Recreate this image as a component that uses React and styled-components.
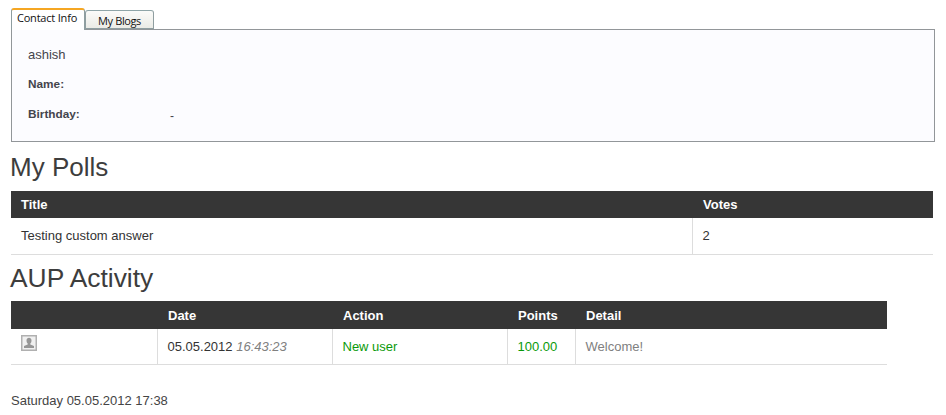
import React from "react";
import styled, { createGlobalStyle } from "styled-components";

const GlobalStyle = createGlobalStyle`
  html, body {
    margin: 0;
    padding: 0;
    background: #ffffff;
    font-family: "Liberation Sans", Arial, sans-serif;
  }
`;

const Page = styled.div`
  width: 946px;
  height: 415px;
  overflow: hidden;
  padding: 8px 0 0 11px;
  box-sizing: border-box;
  color: #3b3b3b;
`;

const TabBar = styled.div`
  display: flex;
  align-items: flex-end;
  height: 21px;
  position: relative;
  z-index: 1;
`;

const Tab = styled.div`
  box-sizing: border-box;
  width: ${(p) => p.$width}px;
  height: ${(p) => (p.$active ? 22 : 19)}px;
  margin-bottom: ${(p) => (p.$active ? -1 : 0)}px;
  border: 1px solid #8f9ea0;
  border-top: ${(p) => (p.$active ? "2px solid #f5a623" : "1px solid #8fa5a8")};
  border-bottom: ${(p) => (p.$active ? "none" : "1px solid #8f9ea0")};
  border-radius: 3px 3px 0 0;
  background: ${(p) => (p.$active ? "#ffffff" : "linear-gradient(#fbfbf9, #ebebe6)")};
  font-family: "Open Sans", "Liberation Sans", sans-serif;
  font-size: 11px;
  line-height: ${(p) => (p.$active ? 15 : 20)}px;
  letter-spacing: ${(p) => (p.$active ? -0.2 : -0.4)}px;
  padding-right: ${(p) => (p.$active ? 2 : 0)}px;
  text-align: center;
  color: #111111;
`;

const Panel = styled.div`
  box-sizing: border-box;
  width: 924px;
  height: 113px;
  border: 1px solid #929699;
  background: #fcfcff;
  padding: 17px 16px 0;
  font-size: 12px;
  color: #44444c;
`;

const UserName = styled.div`
  font-size: 13px;
  line-height: 15px;
  margin-bottom: 15px;
`;

const InfoRow = styled.div`
  display: flex;
  height: 30px;
`;

const InfoLabel = styled.div`
  width: 142px;
  font-size: 11.8px;
  font-weight: bold;
  line-height: 15px;
`;

const InfoValue = styled.div`
  line-height: 15px;
  padding-top: 2px;
`;

const Heading = styled.h2`
  margin: ${(p) => p.$top}px 0 0 -1px;
  font-size: ${(p) => p.$size || 26}px;
  font-weight: normal;
  line-height: 29px;
  height: ${(p) => p.$h}px;
  color: #3d3d3d;
`;

const Table = styled.table`
  width: ${(p) => p.$width}px;
  border-collapse: collapse;
  table-layout: fixed;
  font-size: 13px;
`;

const HeadCell = styled.th`
  background: #363636;
  color: #ffffff;
  font-size: 13px;
  font-weight: bold;
  text-align: left;
  height: ${(p) => p.$h}px;
  padding: ${(p) => (p.$h > 27 ? 2 : 0)}px 0 0 ${(p) => (p.$first ? 10 : 11)}px;
  box-sizing: border-box;
`;

const Cell = styled.td`
  height: ${(p) => p.$h}px;
  padding: 0 0 ${(p) => p.$lift || 0}px 10px;
  box-sizing: border-box;
  border-bottom: 1px solid #dddddd;
  border-left: ${(p) => (p.$first ? "none" : "1px solid #dddddd")};
  color: ${(p) => p.$color || "#333333"};
  vertical-align: ${(p) => (p.$top ? "top" : "middle")};
`;

const Time = styled.i`
  color: #808080;
`;

const Avatar = styled.svg`
  display: block;
  margin-top: 6px;
`;

const Footer = styled.div`
  margin-top: 28px;
  font-size: 13px;
  line-height: 15px;
  color: #444444;
`;

const polls = [{ title: "Testing custom answer", votes: 2 }];

export default function App() {
  return (
    <Page>
      <GlobalStyle />
      <TabBar>
        <Tab $active $width={74}>Contact Info</Tab>
        <Tab $width={69}>My Blogs</Tab>
      </TabBar>
      <Panel>
        <UserName>ashish</UserName>
        <InfoRow>
          <InfoLabel>Name:</InfoLabel>
        </InfoRow>
        <InfoRow>
          <InfoLabel>Birthday:</InfoLabel>
          <InfoValue>-</InfoValue>
        </InfoRow>
      </Panel>
      <Heading $top={11} $h={38}>My Polls</Heading>
      <Table $width={922}>
        <colgroup>
          <col width="681" />
          <col width="241" />
        </colgroup>
        <thead>
          <tr>
            <HeadCell $h={27} $first>Title</HeadCell>
            <HeadCell $h={27}>Votes</HeadCell>
          </tr>
        </thead>
        <tbody>
          {polls.map((p) => (
            <tr key={p.title}>
              <Cell $h={36} $lift={1} $first>{p.title}</Cell>
              <Cell $h={36} $lift={1}>{p.votes}</Cell>
            </tr>
          ))}
        </tbody>
      </Table>
      <Heading $top={9} $h={37} $size={26.4}>AUP Activity</Heading>
      <Table $width={876}>
        <colgroup>
          <col width="146" />
          <col width="175" />
          <col width="175" />
          <col width="68" />
          <col width="312" />
        </colgroup>
        <thead>
          <tr>
            <HeadCell $h={28} />
            <HeadCell $h={28}>Date</HeadCell>
            <HeadCell $h={28}>Action</HeadCell>
            <HeadCell $h={28}>Points</HeadCell>
            <HeadCell $h={28}>Detail</HeadCell>
          </tr>
        </thead>
        <tbody>
          <tr>
            <Cell $h={36} $first $top>
              <Avatar width="16" height="16" viewBox="0 0 16 16">
                <rect x="0.75" y="0.75" width="14.5" height="14.5" fill="#f0f0f0" stroke="#b0b0b0" strokeWidth="1.5" />
                <path d="M5.5 5.5 C5.5 3.6 6.6 2.8 8 2.8 C9.4 2.8 10.5 3.6 10.5 5.5 C10.5 7 9.9 8 9.3 8.5 L9.3 9.5 L13 11 L13 13 L3 13 L3 11 L6.7 9.5 L6.7 8.5 C6.1 8 5.5 7 5.5 5.5 Z" fill="#969696" />
              </Avatar>
            </Cell>
            <Cell $h={36}>05.05.2012 <Time>16:43:23</Time></Cell>
            <Cell $h={36} $color="#0a9a0a">New user</Cell>
            <Cell $h={36} $color="#0a9a0a">100.00</Cell>
            <Cell $h={36} $color="#808080">Welcome!</Cell>
          </tr>
        </tbody>
      </Table>
      <Footer>Saturday 05.05.2012 17:38</Footer>
    </Page>
  );
}
